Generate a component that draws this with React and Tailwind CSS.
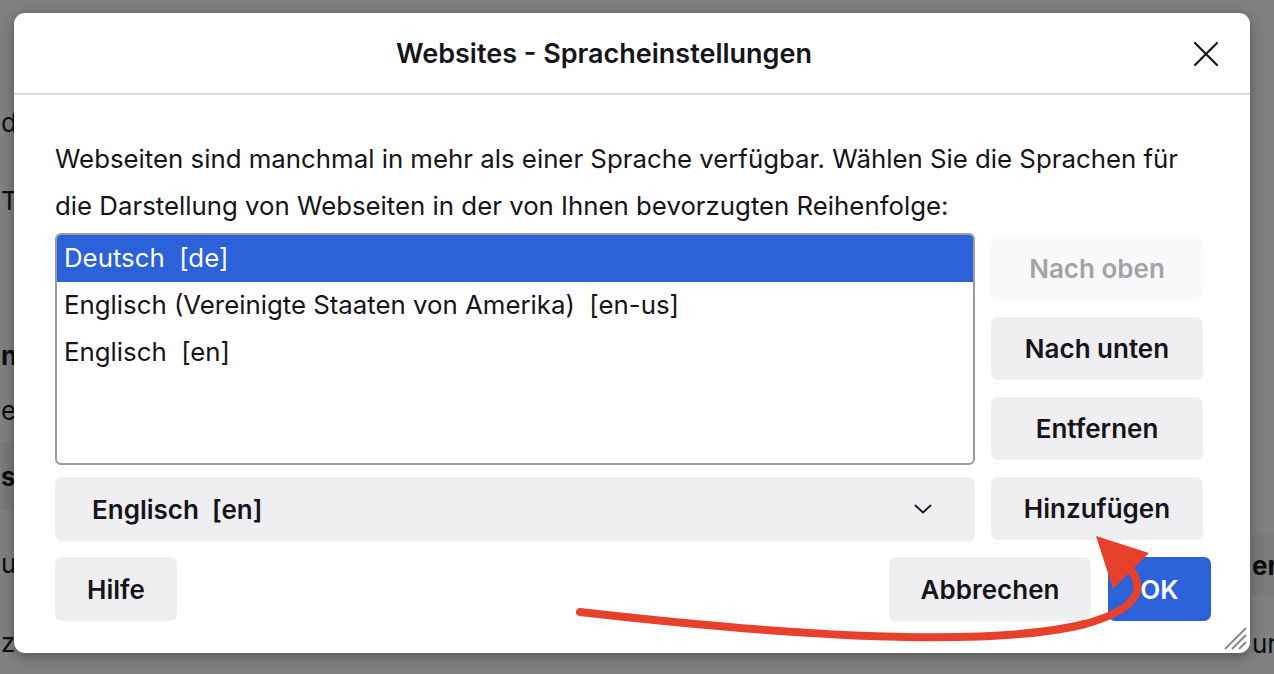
import React from 'react';

const leftRows = [
  { h: 108, text: '' },
  { h: 28, text: 'd' },
  { h: 50, text: '' },
  { h: 28, text: 'Te' },
  { h: 127, text: '' },
  { h: 28, text: 'ne', bold: true },
  { h: 27, text: '' },
  { h: 28, text: 'e' },
  { h: 18, text: '' },
  { h: 68, text: 's', bold: true, band: true },
  { h: 39, text: '' },
  { h: 28, text: 'ug' },
  { h: 51, text: '' },
  { h: 28, text: 'ze' },
];

const rightRows = [
  { h: 535, text: '' },
  { h: 60, text: 'er', bold: true, band: true },
  { h: 34, text: '' },
  { h: 28, text: 'ur' },
];

const languages = [
  'Deutsch  [de]',
  'Englisch (Vereinigte Staaten von Amerika)  [en-us]',
  'Englisch  [en]',
];

function BgColumn({ rows, className }) {
  return (
    <div className={className}>
      {rows.map((r, i) => (
        <div
          key={i}
          style={{ height: r.h }}
          className={
            'flex items-center whitespace-nowrap text-[26px] text-[#0d0d0f] ' +
            (r.bold ? 'font-bold ' : '') +
            (r.band ? 'bg-[#7a7a7b]' : '')
          }
        >
          {r.text}
        </div>
      ))}
    </div>
  );
}

function SideButton({ children, disabled }) {
  return (
    <button
      className={
        disabled
          ? 'h-[63px] w-full rounded-[7px] bg-[#f9f9fb] text-[26px] font-semibold text-[#a3a3a6]'
          : 'h-[63px] w-full rounded-[7px] bg-[#efeff2] text-[26px] font-semibold text-[#15141a]'
      }
    >
      {children}
    </button>
  );
}

export default function App() {
  return (
    <div className="relative h-[674px] w-[1274px] overflow-hidden bg-[#808080] font-['Inter','Noto_Sans',sans-serif]">
      {/* page behind the dimmed overlay */}
      <div className="flex h-full w-full">
        <BgColumn rows={leftRows} className="w-[60px] pl-[1px]" />
        <BgColumn rows={rightRows} className="ml-auto w-[24px] pl-[2px]" />
      </div>

      {/* dialog */}
      <div className="absolute left-[14px] top-[13px] flex h-[640px] w-[1236px] flex-col rounded-[11px] bg-white shadow-[0_3px_14px_rgba(0,0,0,0.35)]">
        <div className="relative flex h-[82px] shrink-0 items-center justify-center border-b-2 border-[#d9d9dc] pr-[56px]">
          <h1 className="pt-[2px] text-[27px] font-semibold text-[#15141a]">Websites - Spracheinstellungen</h1>
          <button className="absolute right-[30px] top-[27px] flex h-[28px] w-[28px] items-center justify-center text-[#15141a]">
            <svg width="26" height="26" viewBox="0 0 26 26" fill="none" stroke="currentColor" strokeWidth="2.2" strokeLinecap="round">
              <path d="M2 2 L24 24 M24 2 L2 24" />
            </svg>
          </button>
        </div>

        <div className="flex flex-col pl-[41px] pr-[47px] pt-[40px]">
          <p className="text-[25.8px] leading-[47px] text-[#15141a]">
            Webseiten sind manchmal in mehr als einer Sprache verfügbar. Wählen Sie die Sprachen für
            <br />
            die Darstellung von Webseiten in der von Ihnen bevorzugten Reihenfolge:
          </p>

          <div className="mt-[4px] flex gap-[16px]">
            <div className="flex flex-1 flex-col">
              <div className="h-[232px] overflow-hidden rounded-[6px] border-2 border-[#9c9ca2]">
                {languages.map((lang, i) => (
                  <div
                    key={lang}
                    className={
                      i === 0
                        ? 'flex h-[47px] items-center whitespace-pre bg-[#2b62d9] px-[7px] text-[25.8px] text-white'
                        : 'flex h-[47px] items-center whitespace-pre px-[7px] text-[25.8px] text-[#15141a]'
                    }
                  >
                    {lang}
                  </div>
                ))}
              </div>
              <div className="mt-[12px] flex h-[64px] items-center justify-between rounded-[7px] bg-[#efeff2] pl-[37px] pr-[43px]">
                <span className="whitespace-pre text-[26px] font-semibold text-[#15141a]">Englisch  [en]</span>
                <svg width="18" height="10" viewBox="0 0 18 10" fill="none" stroke="#15141a" strokeWidth="1.8" strokeLinecap="round" strokeLinejoin="round">
                  <path d="M1.5 1.5 L9 8.5 L16.5 1.5" />
                </svg>
              </div>
            </div>
            <div className="flex w-[212px] flex-col gap-[17px] pt-[4px]">
              <SideButton disabled>Nach oben</SideButton>
              <SideButton>Nach unten</SideButton>
              <SideButton>Entfernen</SideButton>
              <SideButton>Hinzufügen</SideButton>
            </div>
          </div>

          <div className="-mr-[8px] mt-[16px] flex items-center">
            <button className="h-[64px] w-[122px] rounded-[7px] bg-[#efeff2] text-[26px] font-semibold text-[#15141a]">Hilfe</button>
            <div className="ml-auto flex gap-[17px]">
              <button className="h-[64px] w-[202px] rounded-[7px] bg-[#efeff2] text-[26px] font-semibold text-[#15141a]">Abbrechen</button>
              <button className="h-[64px] w-[103px] rounded-[7px] bg-[#2b62d9] text-[26px] font-semibold text-white">OK</button>
            </div>
          </div>
        </div>

        {/* resize grip */}
        <svg className="absolute bottom-[3px] right-[3px]" width="24" height="24" viewBox="0 0 24 24" stroke="#8a8a8e" strokeWidth="2">
          <path d="M2 23 L23 2 M9 23 L23 9 M16 23 L23 16" />
        </svg>
      </div>

      {/* red annotation arrow */}
      <svg className="pointer-events-none absolute left-0 top-0" width="1274" height="674" viewBox="0 0 1274 674">
        <path
          d="M580 612 C 790 636, 990 648, 1085 624 C 1132 611, 1150 592, 1128 566"
          fill="none"
          stroke="#e8412b"
          strokeWidth="8"
          strokeLinecap="round"
        />
        <polygon points="1096,536 1113,589 1149,553" fill="#e8412b" />
      </svg>
    </div>
  );
}
